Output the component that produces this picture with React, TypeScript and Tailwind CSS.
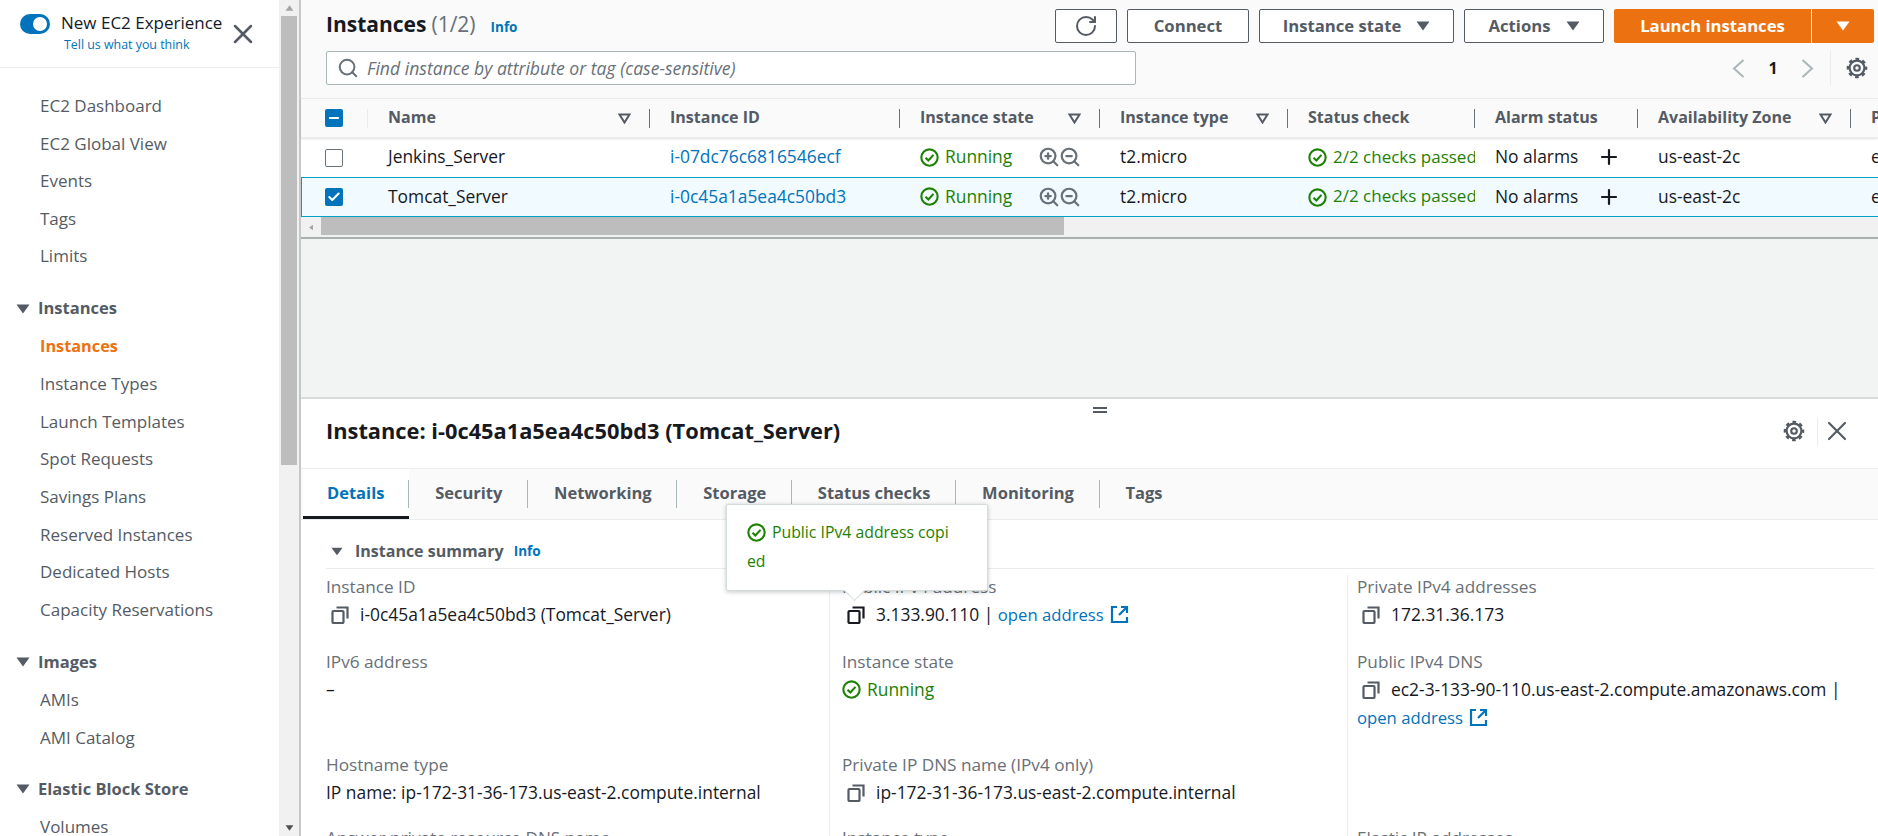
import { ReactNode } from "react";
import { Plus, RotateCw, Search, X, ZoomIn, ZoomOut, Check, Minus } from "lucide-react";

const Tri = ({ className = "", w = 14, h = 10 }: { className?: string; w?: number; h?: number }) => (
  <svg width={w} height={h} viewBox="0 0 14 10" className={className} fill="currentColor">
    <path d="M0.5 0.5h13L7 9.5z" />
  </svg>
);

const FilterTri = () => (
  <svg width="13" height="11" viewBox="0 0 13 11" fill="none" stroke="#545b64" strokeWidth="2">
    <path d="M1.5 1.5h10L6.5 9.5z" />
  </svg>
);

const StatusOk = ({ size = 19 }: { size?: number }) => (
  <svg width={size} height={size} viewBox="0 0 20 20" fill="none" stroke="#1d8102" strokeWidth="2.2" className="shrink-0">
    <circle cx="10" cy="10" r="8.6" />
    <path d="M5.8 10.2l3 3 5.4-6" />
  </svg>
);

const CopyIcon = ({ dark = false }: { dark?: boolean }) => (
  <svg width="18" height="18" viewBox="0 0 18 18" fill="none" stroke={dark ? "#16191f" : "#545b64"} strokeWidth="2.2" className="shrink-0">
    <rect x="1.5" y="5" width="11" height="12" rx="1" />
    <path d="M5.5 1.5h11v11" />
  </svg>
);

const ExternalIcon = () => (
  <svg width="19" height="19" viewBox="0 0 19 19" fill="none" stroke="#0073bb" strokeWidth="2.2" className="ml-[6px] inline-block align-[-3px]">
    <path d="M7 2H2v15h15v-5" />
    <path d="M11 2h6v6M17 2l-8 8" />
  </svg>
);

// cog: ring with eight short teeth and a round hole
const Gear = ({ className = "" }: { className?: string }) => (
  <svg width="22" height="22" viewBox="0 0 22 22" fill="none" stroke="currentColor" className={className}>
    <circle cx="11" cy="11" r="7.4" strokeWidth="2.2" />
    <circle cx="11" cy="11" r="9" strokeWidth="2.6" strokeDasharray="3.6 3.47" strokeDashoffset="1.8" />
    <circle cx="11" cy="11" r="2.8" strokeWidth="2.1" />
  </svg>
);

const Chevron = ({ left = false }: { left?: boolean }) => (
  <svg width="13" height="19" viewBox="0 0 13 19" fill="none" stroke="#aab7b8" strokeWidth="2">
    <path d={left ? "M11.5 1L2 9.5l9.5 8.5" : "M1.5 1L11 9.5 1.5 18"} />
  </svg>
);

const SideItem = ({ label, active = false }: { label: string; active?: boolean }) => (
  <div className={`h-[37.6px] flex items-center pl-[40px] ${active ? "text-[16.3px] font-bold text-[#ec7211]" : "text-[17px] text-[#545b64]"}`}>
    {label}
  </div>
);

const SideHead = ({ label }: { label: string }) => (
  <div className="h-[37.6px] flex items-center pl-[16px] gap-[8px] text-[16.5px] font-bold text-[#545b64]">
    <Tri />
    {label}
  </div>
);

const Sidebar = () => (
  <aside className="w-[279px] shrink-0 h-full overflow-hidden bg-white">
    <div className="h-[68px] border-b border-[#eaeded] flex relative">
      <div className="w-[30px] h-[20px] rounded-full bg-[#0073bb] mt-[14px] ml-[20px] relative">
        <div className="absolute right-[3px] top-[3px] w-[14px] h-[14px] rounded-full bg-white" />
      </div>
      <div className="ml-[11px] mt-[10px]">
        <div className="text-[17px] leading-[26px] text-[#16191f]">New EC2 Experience</div>
        <div className="text-[12.4px] leading-[18px] ml-[3px] text-[#0073bb]">Tell us what you think</div>
      </div>
      <X size={32} strokeWidth={1.9} className="absolute left-[227px] top-[18px] text-[#545b64]" />
    </div>
    <div className="pt-[19px]">
      <SideItem label="EC2 Dashboard" />
      <SideItem label="EC2 Global View" />
      <SideItem label="Events" />
      <SideItem label="Tags" />
      <SideItem label="Limits" />
      <div className="h-[15px]" />
      <SideHead label="Instances" />
      <SideItem label="Instances" active />
      <SideItem label="Instance Types" />
      <SideItem label="Launch Templates" />
      <SideItem label="Spot Requests" />
      <SideItem label="Savings Plans" />
      <SideItem label="Reserved Instances" />
      <SideItem label="Dedicated Hosts" />
      <SideItem label="Capacity Reservations" />
      <div className="h-[15px]" />
      <SideHead label="Images" />
      <SideItem label="AMIs" />
      <SideItem label="AMI Catalog" />
      <div className="h-[14px]" />
      <SideHead label="Elastic Block Store" />
      <SideItem label="Volumes" />
    </div>
  </aside>
);

const SideScroll = () => (
  <div className="w-[22px] shrink-0 h-full bg-[#f1f1f1] flex flex-col items-center border-r-2 border-r-[#c4c8c8] pr-[2px] pl-[2px]">
    <div className="h-[16px] flex items-center justify-center">
      <Tri w={9} h={6} className="text-[#a3a3a3] rotate-180" />
    </div>
    <div className="w-full h-[449px] bg-[#bdbdbd]" />
    <div className="flex-1" />
    <div className="h-[16px] flex items-center justify-center">
      <Tri w={9} h={6} className="text-[#505050]" />
    </div>
  </div>
);

const Btn = ({ children, className = "" }: { children: ReactNode; className?: string }) => (
  <div className={`h-[34px] pb-px flex items-center justify-center gap-[15px] rounded-[2px] border border-[#545b64] bg-white text-[16.7px] font-bold text-[#545b64] ${className}`}>
    {children}
  </div>
);

const Toolbar = () => (
  <div className="h-[99px] border-b border-[#eaeded] pl-[25px] pr-[4px]">
    <div className="flex items-start pt-[9px] h-[51px]">
      <div className="flex items-baseline">
        <span className="text-[21px] font-bold text-[#16191f] leading-[30px]">Instances</span>
        <span className="text-[21px] text-[#687078] ml-[5px] leading-[30px]">(1/2)</span>
        <span className="text-[13.5px] font-bold text-[#0073bb] ml-[15px]">Info</span>
      </div>
      <div className="flex-1" />
      <div className="flex gap-[10px]">
        <Btn className="w-[62px]"><RotateCw size={24} strokeWidth={2} /></Btn>
        <Btn className="w-[122px]">Connect</Btn>
        <Btn className="w-[195px]">Instance state <Tri /></Btn>
        <Btn className="w-[140px]">Actions <Tri /></Btn>
        <div className="flex gap-px">
          <div className="w-[197px] h-[34px] pb-px rounded-l-[2px] bg-[#ec7211] text-white font-bold text-[16.7px] flex items-center justify-center">Launch instances</div>
          <div className="w-[62px] h-[34px] rounded-r-[2px] bg-[#ec7211] text-white flex items-center justify-center"><Tri /></div>
        </div>
      </div>
    </div>
    <div className="flex items-center h-[34px]">
      <div className="w-[810px] h-[34px] rounded-[2px] border border-[#aab7b8] bg-white flex items-center pl-[10px] gap-[8px]">
        <Search size={22} strokeWidth={2.2} className="text-[#687078]" />
        <span className="text-[17.6px] italic text-[#687078]">Find instance by attribute or tag (case-sensitive)</span>
      </div>
      <div className="flex-1" />
      <Chevron left />
      <span className="w-[56px] text-center text-[16px] font-bold text-[#16191f]">1</span>
      <Chevron />
      <div className="w-px h-[34px] bg-[#eaeded] ml-[16px] mr-[15px]" />
      <Gear className="text-[#545b64] mr-[6px]" />
    </div>
  </div>
);

const cols = ["w-[67px]", "w-[282px]", "w-[250px]", "w-[200px]", "w-[188px]", "w-[187px]", "w-[163px]", "w-[213px]", "w-[60px]"];

const HeadCell = ({ w, label, filter = false }: { w: string; label: string; filter?: boolean }) => (
  <div className={`${w} shrink-0 h-[19px] pl-[20px] pr-[18px] flex items-center justify-between border-r border-[#687078] text-[16px] font-bold text-[#545b64] whitespace-nowrap`}>
    <span className="-mt-[2px]">{label}</span>
    {filter && <FilterTri />}
  </div>
);

const TableHead = () => (
  <div className="h-[39px] flex items-center border-b border-[#eaeded] shadow-[0_1px_2px_rgba(0,0,0,0.12)] relative overflow-hidden bg-[#fafafa]">
    <div className={`${cols[0]} shrink-0 h-[19px] pl-[24px] flex items-center border-r border-[#eaeded]`}>
      <div className="w-[18px] h-[18px] rounded-[2px] bg-[#0073bb] flex items-center justify-center">
        <Minus size={14} strokeWidth={3.5} className="text-white" />
      </div>
    </div>
    <HeadCell w={cols[1]} label="Name" filter />
    <HeadCell w={cols[2]} label="Instance ID" />
    <HeadCell w={cols[3]} label="Instance state" filter />
    <HeadCell w={cols[4]} label="Instance type" filter />
    <HeadCell w={cols[5]} label="Status check" />
    <HeadCell w={cols[6]} label="Alarm status" />
    <HeadCell w={cols[7]} label="Availability Zone" filter />
    <div className={`${cols[8]} shrink-0 pl-[20px] -mt-[2px] text-[16px] font-bold text-[#545b64]`}>Public</div>
  </div>
);

const Row = ({ name, id, selected = false }: { name: string; id: string; selected?: boolean }) => (
  <div className={`flex items-center text-[17.4px] text-[#16191f] overflow-hidden whitespace-nowrap ${selected ? "h-[40px] border-y border-[#00a1c9] bg-[#f1faff] border-l border-l-[#00a1c9]" : "h-[39px] bg-white"}`}>
    <div className={`${cols[0]} shrink-0 pl-[24px] ${selected ? "-ml-px" : ""}`}>
      {selected ? (
        <div className="w-[18px] h-[18px] rounded-[2px] bg-[#0073bb] flex items-center justify-center">
          <Check size={14} strokeWidth={3.5} className="text-white" />
        </div>
      ) : (
        <div className="w-[18px] h-[18px] rounded-[2px] border border-[#687078] bg-white" />
      )}
    </div>
    <div className={`${cols[1]} shrink-0 pl-[20px] -mt-[2px]`}>{name}</div>
    <div className={`${cols[2]} shrink-0 pl-[20px] -mt-[2px] text-[#0073bb]`}>{id}</div>
    <div className={`${cols[3]} shrink-0 pl-[20px] flex items-center text-[#1d8102]`}>
      <StatusOk />
      <span className="ml-[6px] w-[93px] -mt-[2px]">Running</span>
      <ZoomIn size={22} strokeWidth={2.4} className="text-[#687078]" />
      <ZoomOut size={22} strokeWidth={2.4} className="text-[#687078] -ml-px" />
    </div>
    <div className={`${cols[4]} shrink-0 pl-[20px] -mt-[2px]`}>t2.micro</div>
    <div className={`${cols[5]} shrink-0 pl-[20px] flex items-center text-[#1d8102] overflow-hidden`}>
      <StatusOk />
      <span className="ml-[6px] -mt-[2px] text-[17px]">2/2 checks passed</span>
    </div>
    <div className={`${cols[6]} shrink-0 pl-[20px] flex items-center`}>
      <span className="w-[102px] -mt-[2px]">No alarms</span>
      <Plus size={24} strokeWidth={2.2} />
    </div>
    <div className={`${cols[7]} shrink-0 pl-[20px] -mt-[2px]`}>us-east-2c</div>
    <div className={`${cols[8]} shrink-0 pl-[20px] -mt-[2px]`}>ec2-3</div>
  </div>
);

const HScroll = () => (
  <div className="h-[22px] bg-[#f1f1f1] flex items-center border-b-2 border-[#a9b0b0]">
    <div className="w-[20px] flex justify-center">
      <Tri w={6} h={9} className="text-[#a3a3a3] rotate-90" />
    </div>
    <div className="w-[743px] h-[18px] bg-[#bdbdbd] -mt-[2px]" />
  </div>
);

const Tab = ({ label, active = false, last = false }: { label: string; active?: boolean; last?: boolean }) => (
  <div className={`relative h-full flex items-center text-[16.5px] font-bold ${active ? "text-[#0073bb] bg-white pl-[24px] pr-[25px]" : "text-[#545b64] px-[25.8px]"}`}>
    <span className="-mt-[2px]">{label}</span>
    {!last && <div className="absolute right-0 top-[11px] h-[28px] w-px bg-[#aab7b8]" />}
    {active && <div className="absolute left-0 right-0 bottom-0 h-[3px] bg-[#16191f]" />}
  </div>
);

const Field = ({ label, children, className = "" }: { label: string; children?: ReactNode; className?: string }) => (
  <div className={className}>
    <div className="text-[17.2px] leading-[24px] text-[#687078]">{label}</div>
    <div className="text-[17.4px] leading-[28px] mt-px text-[#16191f]">{children}</div>
  </div>
);

const Copyable = ({ children, dark = false }: { children: ReactNode; dark?: boolean }) => (
  <span className="pl-[5px]">
    <span className="inline-block align-[-3px] mr-[11px]"><CopyIcon dark={dark} /></span>
    {children}
  </span>
);

const Link = ({ children }: { children: ReactNode }) => <span className="text-[16.7px] text-[#0073bb]">{children}</span>;

const Details = () => (
  <div className="flex-1 min-h-0 bg-white border-t-2 border-[#d5dbdb] relative overflow-hidden">
    <div className="absolute left-[792px] top-[8px] w-[14px] h-[6px] border-y-2 border-[#545b64]" />
    <div className="h-[69px] flex items-center pl-[25px] pr-[25px]">
      <h2 className="text-[21.8px] font-bold text-[#16191f] flex-1 -mt-[4px]">Instance: i-0c45a1a5ea4c50bd3 (Tomcat_Server)</h2>
      <Gear className="text-[#545b64] mt-[-6px]" />
      <div className="w-px h-[28px] bg-[#eaeded] ml-[12px] mr-[3px] mt-[-4px]" />
      <X size={32} strokeWidth={1.6} className="text-[#545b64] mt-[-6px]" />
    </div>
    <div className="h-[52px] flex border-y border-[#eaeded] bg-[#fafafa] pl-[2px]">
      <Tab label="Details" active />
      <Tab label="Security" />
      <Tab label="Networking" />
      <Tab label="Storage" />
      <Tab label="Status checks" />
      <Tab label="Monitoring" />
      <Tab label="Tags" last />
    </div>
    <div className="pl-[25px] pr-[4px]">
      <div className="h-[49px] flex items-center border-b border-[#eaeded] pt-[14px]">
        <Tri w={12} h={9} className="text-[#545b64] ml-[5px]" />
        <span className="text-[16px] font-bold text-[#545b64] ml-[12px]">Instance summary</span>
        <span className="text-[13.5px] font-bold text-[#0073bb] ml-[10px]">Info</span>
      </div>
      <div className="grid grid-cols-[504px_518px_1fr] grid-rows-[75px_103px_73px_60px] pt-[6px]">
        <Field label="Instance ID" className="border-r border-[#eaeded]">
          <Copyable>i-0c45a1a5ea4c50bd3 (Tomcat_Server)</Copyable>
        </Field>
        <Field label="Public IPv4 address" className="border-r border-[#eaeded] pl-[12px]">
          <Copyable dark>3.133.90.110 | <Link>open address</Link><ExternalIcon /></Copyable>
        </Field>
        <Field label="Private IPv4 addresses" className="pl-[9px]">
          <Copyable>172.31.36.173</Copyable>
        </Field>
        <Field label="IPv6 address" className="border-r border-[#eaeded]">–</Field>
        <Field label="Instance state" className="border-r border-[#eaeded] pl-[12px]">
          <span className="flex items-center gap-[6px] text-[#1d8102]"><StatusOk />Running</span>
        </Field>
        <Field label="Public IPv4 DNS" className="pl-[9px]">
          <Copyable>ec2-3-133-90-110.us-east-2.compute.amazonaws.com |</Copyable>
          <br />
          <Link>open address</Link><ExternalIcon />
        </Field>
        <Field label="Hostname type" className="border-r border-[#eaeded]">IP name: ip-172-31-36-173.us-east-2.compute.internal</Field>
        <Field label="Private IP DNS name (IPv4 only)" className="border-r border-[#eaeded] pl-[12px]">
          <Copyable>ip-172-31-36-173.us-east-2.compute.internal</Copyable>
        </Field>
        <div />
        <Field label="Answer private resource DNS name" className="border-r border-[#eaeded]" />
        <Field label="Instance type" className="border-r border-[#eaeded] pl-[12px]" />
        <Field label="Elastic IP addresses" className="pl-[9px]" />
      </div>
    </div>
  </div>
);

const Popover = () => (
  <div className="absolute left-[425px] top-[504px] w-[262px] h-[87px] bg-white border border-[#d5dbdb] rounded-[2px] shadow-[0_1px_4px_rgba(0,28,36,0.25)] text-[15.8px] text-[#1d8102] px-[20px] pt-[13px] leading-[29px] whitespace-nowrap">
    <span className="inline-block align-[-4px] mr-[6px]"><StatusOk /></span>
    Public IPv4 address copi
    <br />
    ed
    <div className="absolute left-[120px] bottom-[-8px] w-[15px] h-[15px] rotate-45 bg-white border-r border-b border-[#d5dbdb]" />
  </div>
);

export default function App() {
  return (
    <div className="w-[1878px] h-[836px] flex overflow-hidden bg-white [font-family:'Open_Sans',sans-serif]">
      <Sidebar />
      <SideScroll />
      <main className="flex-1 min-w-0 h-full flex flex-col relative bg-[#f2f3f3]">
        <div className="bg-[#fafafa]">
          <Toolbar />
          <TableHead />
          <Row name="Jenkins_Server" id="i-07dc76c6816546ecf" />
          <Row name="Tomcat_Server" id="i-0c45a1a5ea4c50bd3" selected />
          <HScroll />
        </div>
        <div className="h-[158px] shrink-0" />
        <Details />
        <Popover />
      </main>
    </div>
  );
}
